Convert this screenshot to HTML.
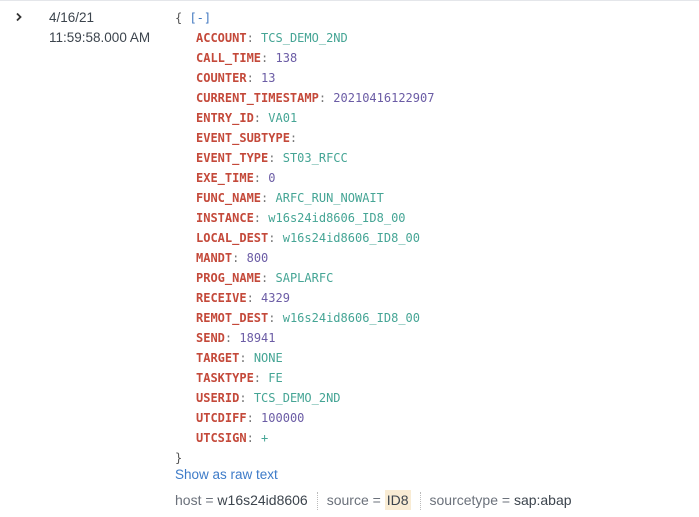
<!DOCTYPE html>
<html><head><style>
body{margin:0;width:699px;height:517px;background:#fff;position:relative;overflow:hidden;font-family:"Liberation Sans",sans-serif;}
.top{position:absolute;left:0;top:0;width:699px;height:1px;background:#e4e6ea}
.chev{position:absolute;left:15px;top:12px}
.date{position:absolute;left:49px;top:8px;font-size:13.5px;line-height:20px;color:#3c444d}
.json{position:absolute;left:175px;top:8px;font-family:"DejaVu Sans Mono","Liberation Mono",monospace;font-size:12px;line-height:20px;color:#555}
.json div{white-space:pre}
.k{color:#c4493a;font-weight:bold;margin-left:21px}
.c{color:#777}
.s{color:#45a595}
.n{color:#6b5ca5}
.b{color:#3f77c0}
.raw{position:absolute;left:175px;top:467px;font-size:13.5px;color:#3d7bc8}
.f{position:absolute;left:175px;top:490px;font-size:14px;color:#6b717b;white-space:nowrap;line-height:20px}
.f b{font-weight:normal;color:#3c444d}
.hl{background:#f9ecd4;padding:2px 2px}
.sep{display:inline-block;border-left:1px dotted #bbb;height:18px;vertical-align:middle;margin:0 9px}
</style></head><body>
<div class="top"></div>
<svg class="chev" width="8" height="10" viewBox="0 0 8 10"><path d="M2 1.5 L5.5 5 L2 8.5" fill="none" stroke="#333" stroke-width="1.8"/></svg>
<div class="date">4/16/21<br>11:59:58.000 AM</div>
<div class="json">
<div>{ <span class="b">[-]</span></div>
<div><span class="k">ACCOUNT</span><span class="c">:</span> <span class="s">TCS_DEMO_2ND</span></div>
<div><span class="k">CALL_TIME</span><span class="c">:</span> <span class="n">138</span></div>
<div><span class="k">COUNTER</span><span class="c">:</span> <span class="n">13</span></div>
<div><span class="k">CURRENT_TIMESTAMP</span><span class="c">:</span> <span class="n">20210416122907</span></div>
<div><span class="k">ENTRY_ID</span><span class="c">:</span> <span class="s">VA01</span></div>
<div><span class="k">EVENT_SUBTYPE</span><span class="c">:</span></div>
<div><span class="k">EVENT_TYPE</span><span class="c">:</span> <span class="s">ST03_RFCC</span></div>
<div><span class="k">EXE_TIME</span><span class="c">:</span> <span class="n">0</span></div>
<div><span class="k">FUNC_NAME</span><span class="c">:</span> <span class="s">ARFC_RUN_NOWAIT</span></div>
<div><span class="k">INSTANCE</span><span class="c">:</span> <span class="s">w16s24id8606_ID8_00</span></div>
<div><span class="k">LOCAL_DEST</span><span class="c">:</span> <span class="s">w16s24id8606_ID8_00</span></div>
<div><span class="k">MANDT</span><span class="c">:</span> <span class="n">800</span></div>
<div><span class="k">PROG_NAME</span><span class="c">:</span> <span class="s">SAPLARFC</span></div>
<div><span class="k">RECEIVE</span><span class="c">:</span> <span class="n">4329</span></div>
<div><span class="k">REMOT_DEST</span><span class="c">:</span> <span class="s">w16s24id8606_ID8_00</span></div>
<div><span class="k">SEND</span><span class="c">:</span> <span class="n">18941</span></div>
<div><span class="k">TARGET</span><span class="c">:</span> <span class="s">NONE</span></div>
<div><span class="k">TASKTYPE</span><span class="c">:</span> <span class="s">FE</span></div>
<div><span class="k">USERID</span><span class="c">:</span> <span class="s">TCS_DEMO_2ND</span></div>
<div><span class="k">UTCDIFF</span><span class="c">:</span> <span class="n">100000</span></div>
<div><span class="k">UTCSIGN</span><span class="c">:</span> <span class="s">+</span></div>
<div>}</div>
</div>
<div class="raw">Show as raw text</div>
<div class="f">host = <b>w16s24id8606</b><span class="sep"></span>source = <b class="hl">ID8</b><span class="sep"></span>sourcetype = <b>sap:abap</b></div>
</body></html>
